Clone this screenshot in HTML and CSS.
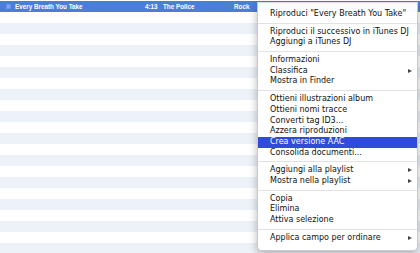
FILE: index.html
```html
<!DOCTYPE html>
<html>
<head>
<meta charset="utf-8">
<link rel="stylesheet" href="styles.css">
</head>
<body>
<div class="list">
  <div class="row selected">
    <span class="check"></span>
    <span class="name">Every Breath You Take</span>
    <span class="time">4:13</span>
    <span class="artist">The Police</span>
    <span class="genre">Rock</span>
  </div>
  <div class="row"></div><div class="row alt"></div>
  <div class="row"></div><div class="row alt"></div>
  <div class="row"></div><div class="row alt"></div>
  <div class="row"></div><div class="row alt"></div>
  <div class="row"></div><div class="row alt"></div>
  <div class="row"></div><div class="row alt"></div>
  <div class="row"></div><div class="row alt"></div>
  <div class="row"></div><div class="row alt"></div>
  <div class="row"></div><div class="row alt"></div>
  <div class="row"></div><div class="row alt"></div>
  <div class="row"></div><div class="row alt"></div>
  <div class="row"></div><div class="row alt"></div>
</div>
<div class="menu">
  <div class="item">Riproduci "Every Breath You Take"</div>
  <div class="sep"></div>
  <div class="item">Riproduci il successivo in iTunes DJ</div>
  <div class="item">Aggiungi a iTunes DJ</div>
  <div class="sep"></div>
  <div class="item">Informazioni</div>
  <div class="item sub">Classifica</div>
  <div class="item">Mostra in Finder</div>
  <div class="sep"></div>
  <div class="item">Ottieni illustrazioni album</div>
  <div class="item">Ottieni nomi tracce</div>
  <div class="item">Converti tag ID3...</div>
  <div class="item">Azzera riproduzioni</div>
  <div class="item active">Crea versione AAC</div>
  <div class="item">Consolida documenti...</div>
  <div class="sep"></div>
  <div class="item sub">Aggiungi alla playlist</div>
  <div class="item sub">Mostra nella playlist</div>
  <div class="sep"></div>
  <div class="item">Copia</div>
  <div class="item">Elimina</div>
  <div class="item">Attiva selezione</div>
  <div class="sep"></div>
  <div class="item sub">Applica campo per ordinare</div>
</div>
</body>
</html>
```
FILE: styles.css
```css
html, body {
  margin: 0;
  padding: 0;
  background: #ffffff;
  width: 420px;
  height: 253px;
  overflow: hidden;
  font-family: "DejaVu Sans", "Liberation Sans", sans-serif;
}
.list {
  padding-top: 1px;
  height: 252px;
  overflow: hidden;
}
.row {
  height: 11px;
  background: #ffffff;
  display: flex;
  align-items: center;
  font-family: "Liberation Sans", "DejaVu Sans", sans-serif;
  font-size: 6.3px;
  font-weight: bold;
  color: #ffffff;
  white-space: nowrap;
}
.row.alt {
  background: #edf1f8;
}
.row.selected {
  background: #4a7fd8;
}
.check {
  width: 5px;
  height: 5px;
  margin-left: 6px;
  background: #7ea5e8;
  border: 1px solid #6c95dd;
  box-sizing: border-box;
}
.name {
  margin-left: 4px;
  width: 130px;
}
.time {
  width: 18px;
}
.artist {
  width: 71px;
}
.menu {
  position: absolute;
  left: 257px;
  top: 2px;
  width: 159px;
  padding: 6px 0 7px 0;
  background: rgba(255, 255, 255, 0.97);
  border: 1px solid #c9c9c9;
  border-top-color: #dcdcdc;
  border-radius: 0 0 5px 5px;
  box-shadow: 0 3px 8px rgba(0, 0, 0, 0.28);
  font-size: 8px;
  color: #111;
}
.item {
  height: 10.7px;
  line-height: 10.7px;
  padding-left: 12px;
  position: relative;
  white-space: nowrap;
}
.item.active {
  background: #2f4bd8;
  color: #ffffff;
}
.item.sub::after {
  content: "";
  position: absolute;
  right: 5px;
  top: 3px;
  border-left: 4px solid #444;
  border-top: 2.5px solid transparent;
  border-bottom: 2.5px solid transparent;
}
.sep {
  height: 1px;
  margin: 3px 0;
  background: #e2e2e2;
}
```
